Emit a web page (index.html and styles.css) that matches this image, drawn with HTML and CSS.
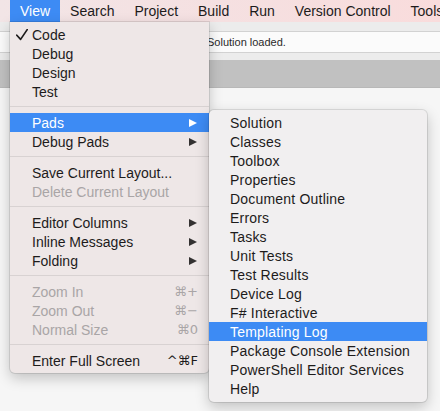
FILE: index.html
```html
<!DOCTYPE html>
<html>
<head>
<meta charset="utf-8">
<link rel="stylesheet" href="styles.css">
</head>
<body>
<div class="screen">
  <nav class="menubar">
    <span class="title active">View</span>
    <span class="title">Search</span>
    <span class="title">Project</span>
    <span class="title">Build</span>
    <span class="title">Run</span>
    <span class="title">Version Control</span>
    <span class="title">Tools</span>
  </nav>
  <div class="workspace">
    <div class="strip"></div>
    <div class="infobar">Solution loaded.</div>
    <div class="strip"></div>
    <div class="toolband"></div>
    <div class="pane"></div>
  </div>

  <ul class="menu main-menu">
    <li class="item"><svg class="check" width="12" height="12" viewBox="0 0 12 12"><path d="M0.8 6.2 L4.6 10.4 L11.2 0.6" fill="none" stroke="#1d1b1b" stroke-width="1.7" stroke-linecap="round" stroke-linejoin="round"/></svg>Code</li>
    <li class="item">Debug</li>
    <li class="item">Design</li>
    <li class="item">Test</li>
    <li class="sep"></li>
    <li class="item selected">Pads<span class="arrow"></span></li>
    <li class="item">Debug Pads<span class="arrow"></span></li>
    <li class="sep"></li>
    <li class="item">Save Current Layout...</li>
    <li class="item disabled">Delete Current Layout</li>
    <li class="sep"></li>
    <li class="item">Editor Columns<span class="arrow"></span></li>
    <li class="item">Inline Messages<span class="arrow"></span></li>
    <li class="item">Folding<span class="arrow"></span></li>
    <li class="sep"></li>
    <li class="item disabled">Zoom In<span class="key">⌘+</span></li>
    <li class="item disabled">Zoom Out<span class="key">⌘−</span></li>
    <li class="item disabled">Normal Size<span class="key">⌘0</span></li>
    <li class="sep"></li>
    <li class="item">Enter Full Screen<span class="key">^⌘F</span></li>
  </ul>

  <ul class="menu sub-menu">
    <li class="item">Solution</li>
    <li class="item">Classes</li>
    <li class="item">Toolbox</li>
    <li class="item">Properties</li>
    <li class="item">Document Outline</li>
    <li class="item">Errors</li>
    <li class="item">Tasks</li>
    <li class="item">Unit Tests</li>
    <li class="item">Test Results</li>
    <li class="item">Device Log</li>
    <li class="item">F# Interactive</li>
    <li class="item selected">Templating Log</li>
    <li class="item">Package Console Extension</li>
    <li class="item">PowerShell Editor Services</li>
    <li class="item">Help</li>
  </ul>
</div>
</body>
</html>
```

FILE: styles.css
```css
* { box-sizing: border-box; }
html, body { margin: 0; padding: 0; }
body {
  width: 440px;
  height: 411px;
  overflow: hidden;
  font-family: "Liberation Sans", Arial, sans-serif;
  font-size: 14px;
  color: #1d1b1b;
  background: #f5f5f5;
}
.screen {
  position: relative;
  width: 440px;
  height: 411px;
  overflow: hidden;
}
.menubar {
  display: flex;
  height: 22px;
  padding-left: 10px;
  background: linear-gradient(to right, #f2e5e6 0%, #f5e0e1 50%, #f9dcdc 100%);
  white-space: nowrap;
}
.title {
  padding: 0 10px;
  line-height: 22px;
  color: #1d1b1b;
}
.title.active {
  background: #3d8bf4;
  color: #fff;
}
.workspace {
  display: flex;
  flex-direction: column;
}
.strip {
  height: 9px;
  background: #ececec;
}
.strip + .infobar + .strip { height: 7px; }
.infobar {
  height: 22px;
  background: #fbfbfb;
  border-top: 1px solid #d2d2d2;
  border-bottom: 1px solid #d2d2d2;
  padding-left: 207px;
  font-size: 11px;
  line-height: 20px;
  color: #2a2a2a;
}
.toolband {
  height: 28px;
  background: #c1c1c1;
  border-bottom: 1px solid #b8b8b8;
}
.pane {
  height: 330px;
  background: #f6f6f6;
}
.menu {
  position: absolute;
  list-style: none;
  margin: 0;
  padding: 3px 0;
  box-shadow: 0 5px 14px rgba(0,0,0,0.22), 0 0 0 1px rgba(0,0,0,0.10);
}
.main-menu {
  left: 10px;
  top: 22px;
  width: 199px;
  background: #eee7e7;
  border-radius: 0 0 5px 5px;
}
.sub-menu {
  left: 209px;
  top: 110px;
  width: 218px;
  padding: 3px 0 4px;
  background: #f1eff0;
  border-radius: 5px;
}
.item {
  position: relative;
  display: flex;
  align-items: center;
  height: 19px;
  padding: 0 11px 0 22px;
  white-space: nowrap;
}
.sub-menu .item { padding-left: 21px; letter-spacing: 0.2px; }
.item.selected {
  background: #3d8bf4;
  color: #fff;
}
.item.disabled { color: #a9a5a6; }
.check {
  position: absolute;
  left: 6px;
  top: 4px;
}
.sep {
  height: 1px;
  margin: 5px 0 6px;
  background: #d8d2d2;
}
.arrow {
  margin-left: auto;
  margin-right: 1px;
  width: 0;
  height: 0;
  border-left: 8px solid #333131;
  border-top: 4.5px solid transparent;
  border-bottom: 4.5px solid transparent;
}
.item.selected .arrow { border-left-color: #fff; }
.key {
  margin-left: auto;
  font-family: "DejaVu Sans", "Liberation Sans", sans-serif;
  font-size: 13px;
}
```
